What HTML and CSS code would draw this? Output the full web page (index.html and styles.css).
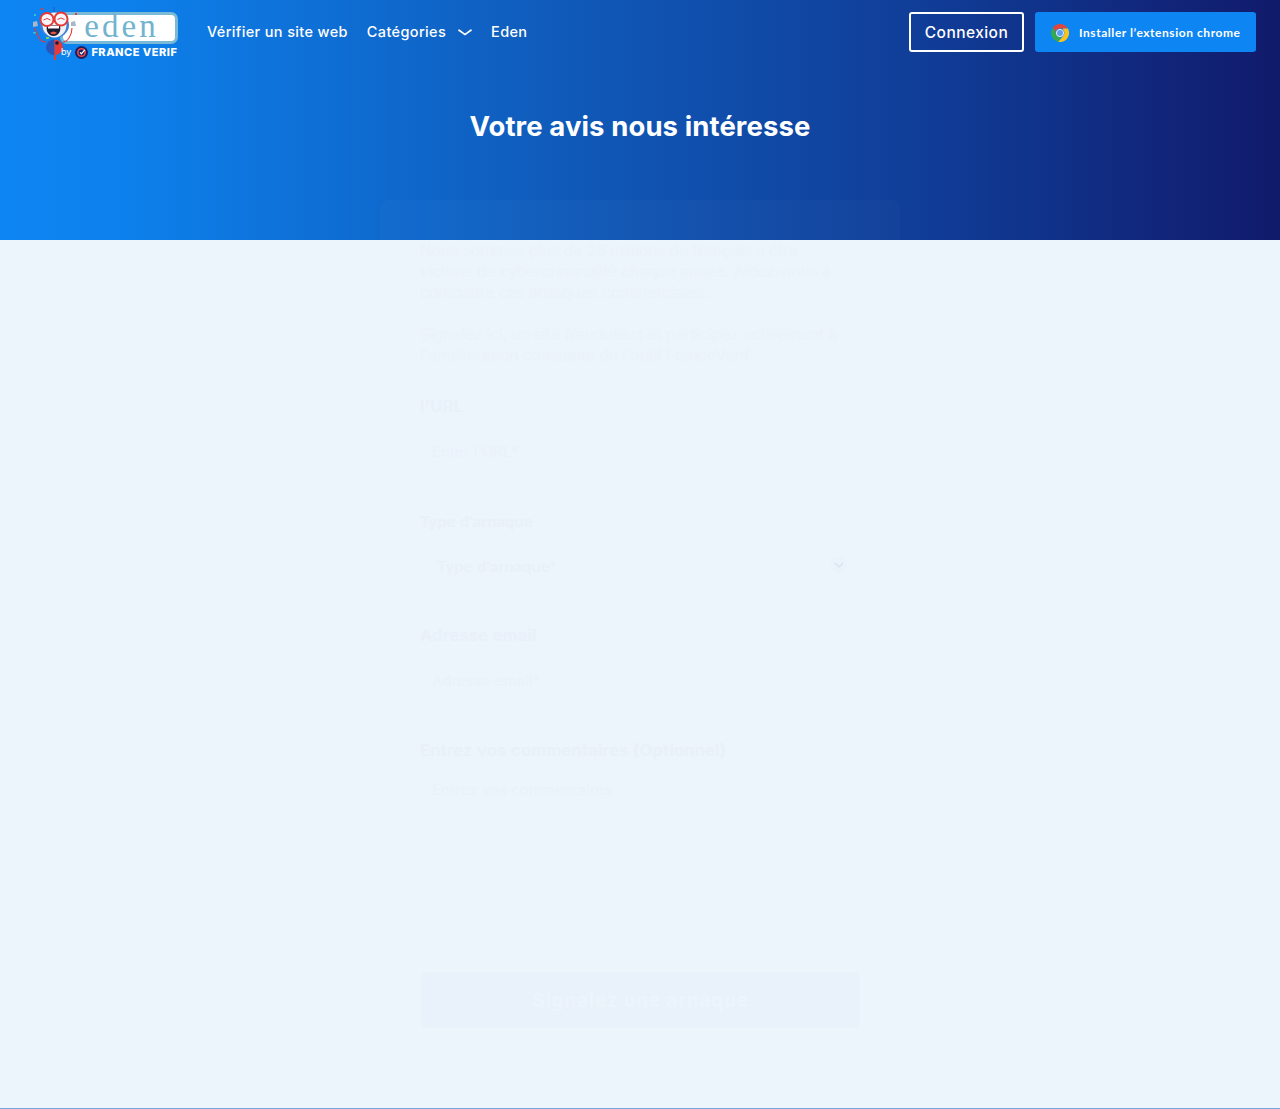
FILE: index.html
```html
<!DOCTYPE html>
<html lang="fr">
<head>
<meta charset="utf-8">
<title>Votre avis nous intéresse</title>
<link rel="stylesheet" href="styles.css">
</head>
<body>
<div class="page">
  <section class="hero">
    <header class="topbar">
      <a class="logo" href="#" aria-label="Eden by France Verif">
        <span class="logo-pill">eden</span>
        <svg class="logo-robot" width="60" height="58" viewBox="0 0 60 58">
          <g fill="none" stroke="#e63a36" stroke-width="1.100">
            <path d="M14 37c-3 0-5-1-7-4-2-3-3-6-4-10M31 37c3 0 4-1 6-4 2-3 3-6 3-10"/>
          </g>
          <path d="M1 22l0-5 4-1 1 5zM39 21l0-4 4-1 1 5z" fill="#a9b7c9"/>
          <path d="M22 2v5" stroke="#2b55b8" stroke-width="1"/>
          <ellipse cx="22.500" cy="20" rx="14.500" ry="13" fill="#3f7fd6"/>
          <ellipse cx="22.500" cy="20" rx="12" ry="12.500" fill="#eef2f8"/>
          <path d="M15 20.500h13c1.500 6-2 10.500-6.500 10.500S13.500 26.500 15 20.500z" fill="#1d1b2f"/>
          <path d="M16 21h11v2.500H16z" fill="#fff"/>
          <path d="M18 28q3.500-3 7 0q-3.500 2.500-7 0z" fill="#e2574c"/>
          <circle cx="15" cy="14.500" r="6.500" fill="#f6f6fa" stroke="#e63a36" stroke-width="2"/>
          <circle cx="29" cy="14" r="6.500" fill="#f6f6fa" stroke="#e63a36" stroke-width="2"/>
          <path d="M11.500 15q3.500-3 7 0M25.500 14.500q3.500-3 7 0" fill="none" stroke="#e63a36" stroke-width="1"/>
          <path d="M22.500 34.500a8.500 8 0 0 0-8.500 8c0 4 4 7 8.500 8z" fill="#2b55b8"/>
          <path d="M22.500 34.500a8.500 8 0 0 1 8.500 8c0 4-4 7-8.500 8z" fill="#e63a36"/>
          <circle cx="25" cy="38" r="1.800" fill="#1d1b2f"/>
          <path d="M23 50v5" stroke="#e63a36" stroke-width="2"/>
          <g fill="#3ac0c8"><rect x="2" y="9" width="2" height="2"/><rect x="9" y="3" width="2" height="2" fill="#e63a36"/><rect x="1" y="27" width="3" height="1.500"/><rect x="14" y="32" width="3" height="2" fill="#7bd050"/><rect x="43" y="8" width="2" height="2" fill="#e63a36"/></g>
        </svg>
        <span class="logo-by">by
          <svg class="logo-target" width="13" height="13" viewBox="0 0 13 13"><circle cx="6.500" cy="6.500" r="6.500" fill="#1c1f5e"/><circle cx="6.500" cy="6.500" r="3.700" fill="none" stroke="#f0484a" stroke-width="1.600"/><path d="M5 6.400l1.400 1.400 3.400-4" fill="none" stroke="#fff" stroke-width="1.300"/></svg>
          <b>FRANCE VERIF</b>
        </span>
      </a>
      <nav class="nav">
        <a href="#">Vérifier un site web</a>
        <a href="#" class="nav-cat">Catégories
          <svg width="14" height="7" viewBox="0 0 14 7"><path d="M1 1.200c3 2 4.500 3.600 6 4.300 1.500-.7 3-2.300 6-4.300" fill="none" stroke="#fff" stroke-width="1.700" stroke-linecap="round"/></svg>
        </a>
        <a href="#">Eden</a>
      </nav>
      <div class="actions">
        <a class="btn-login" href="#">Connexion</a>
        <a class="btn-install" href="#">
          <svg width="18" height="18" viewBox="0 0 18 18">
            <path d="M9 0a9 9 0 0 1 7.800 4.500H9A4.500 4.500 0 0 0 4.700 7.700L1.900 3.500A9 9 0 0 1 9 0z" fill="#e2453a"/>
            <path d="M1.900 3.500 5.100 9a4.500 4.500 0 0 0 4.900 4.400L7.300 17.800A9 9 0 0 1 1.900 3.500z" fill="#35a853"/>
            <path d="M16.800 4.500A9 9 0 0 1 7.300 17.800L11.900 12.300A4.500 4.500 0 0 0 12.100 5.700l-.1-1.200z" fill="#f9c31f"/>
            <circle cx="9" cy="9" r="3.600" fill="#5a9ff0" stroke="#e8eef8" stroke-width="1"/>
          </svg>
          Installer l’extension chrome
        </a>
      </div>
    </header>
    <h1 class="title">Votre avis nous intéresse</h1>
  </section>

  <main class="card">
    <form class="card-body">
      <p class="intro">Nous sommes plus de 26 millions de français a être victime de cybercriminalité chaque année. Aidez-nous à combattre ces arnaques commerciales.<br><br>Signalez ici, un site frauduleux et participez activement à l'amélioration constante de l'outil FranceVerif.</p>
      <div class="field">
        <label class="label">l'URL</label>
        <div class="input">Enter l'URL*</div>
      </div>
      <div class="field">
        <label class="label label-alt">Type d'arnaque</label>
        <div class="input select"><span>Type d'arnaque*</span><span class="chev"><svg width="10" height="6" viewBox="0 0 10 6"><path d="M1 1l4 4 4-4" fill="none" stroke="#000" stroke-width="1.500"/></svg></span></div>
      </div>
      <div class="field">
        <label class="label">Adresse email</label>
        <div class="input">Adresse email*</div>
      </div>
      <div class="field field-comment">
        <label class="label">Entrez vos commentaires (Optionnel)</label>
        <div class="textarea">Entrez vos commentaires</div>
      </div>
      <button class="submit" type="button"><span>Signalez une arnaque</span></button>
    </form>
  </main>
  <footer class="foot"></footer>
</div>
</body>
</html>
```
FILE: styles.css
```css
* { box-sizing: border-box; }
html, body { margin: 0; padding: 0; }
body {
  background: #ecf4fc;
  font-family: Inter, "Noto Sans", sans-serif;
  color: #fff;
}
a { color: inherit; text-decoration: none; }
.page {
  min-height: 1109px;
  display: flex;
  flex-direction: column;
}
.hero {
  height: 240px;
  background: linear-gradient(90deg, #0d85f3 0%, #0d82ee 8%, #1059b8 45%, #103a94 75%, #111a6b 100%);
}
.topbar {
  height: 64px;
  display: flex;
  align-items: center;
  padding: 0 24px 0 30px;
}
.logo {
  position: relative;
  display: block;
  width: 150px;
  height: 64px;
  flex: none;
}
.logo-robot { position: absolute; left: 2px; top: 5px; }
.logo-pill {
  position: absolute;
  left: 30px;
  top: 12px;
  width: 118px;
  height: 32px;
  background: #fff;
  border: 3px solid #7bbad6;
  border-radius: 7px;
  color: #72b4cf;
  font: 400 33px/22px "Liberation Serif", serif;
  text-align: center;
  padding-left: 5px;
  letter-spacing: 3px;
}
.logo-by {
  position: absolute;
  left: 31px;
  top: 46px;
  height: 12px;
  display: flex;
  align-items: center;
  gap: 2px;
  font-size: 9px;
  line-height: 12px;
  white-space: nowrap;
}
.logo-by b { font: 800 11px/12px Inter, sans-serif; letter-spacing: .5px; }
.logo-target { margin: 0 1px 0 2px; flex: none; }
.nav {
  display: flex;
  align-items: center;
  gap: 19px;
  margin-left: 27px;
  padding-bottom: 1px;
  font-size: 14.500px;
  font-weight: 500;
  letter-spacing: .35px;
}
.nav-cat { display: flex; align-items: center; gap: 12px; }
.nav-cat svg { margin-top: 2px; }
.actions {
  margin-left: auto;
  display: flex;
  align-items: center;
  gap: 11px;
}
.btn-login {
  width: 115px;
  height: 40px;
  border: 2px solid #fff;
  border-radius: 3px;
  display: flex;
  align-items: center;
  justify-content: center;
  font-size: 15.500px;
  font-weight: 500;
  letter-spacing: .45px;
}
.btn-install {
  width: 221px;
  height: 40px;
  background: #0d85f3;
  border-radius: 3px;
  display: flex;
  align-items: center;
  gap: 10px;
  padding: 1px 0 0 16px;
  font: 700 12px/1 Lato, sans-serif;
  letter-spacing: .55px;
}
.title {
  margin: 44px 0 0;
  text-align: center;
  font-size: 27.500px;
  line-height: 36px;
  font-weight: 700;
  letter-spacing: .1px;
}
.card {
  position: relative;
  width: 520px;
  margin: -40px auto 0;
  background: rgba(255, 255, 255, .02);
  border-radius: 8px 8px 0 0;
  padding: 40px 40px 0;
  flex: 1;
}
.card-body { display: flex; flex-direction: column; }
.intro {
  margin: 0;
  max-width: 428px;
  font-size: 15.500px;
  line-height: 21px;
  color: #eaf2fa;
}
.field { margin-top: 28px; }
.field + .field { margin-top: 33px; }
.label {
  display: block;
  height: 24px;
  font-size: 16.500px;
  line-height: 24px;
  font-weight: 600;
  letter-spacing: .3px;
  color: #e8f0f9;
}
.label-alt { font: 700 16px/24px Lato, sans-serif; letter-spacing: .3px; }
.input {
  height: 48px;
  margin-top: 9.500px;
  padding: 0 12px;
  display: flex;
  align-items: center;
  font-size: 14.500px;
  letter-spacing: .3px;
  color: #e9f2fb;
}
.select {
  justify-content: space-between;
  padding: 0 13px 2px 17px;
  font: 500 16px Lato, sans-serif;
  letter-spacing: .4px;
  color: #e8f0f9;
}
.chev {
  width: 16px;
  height: 16px;
  border-radius: 50%;
  background: #eaf2fb;
  display: flex;
  align-items: center;
  justify-content: center;
}
.chev svg { opacity: .06; }
.field-comment .label { margin-bottom: 8.500px; }
.textarea {
  height: 180px;
  padding: 10px 12px;
  font-size: 14.500px;
  letter-spacing: .3px;
  line-height: 20px;
  color: #e9f2fb;
}
.submit {
  margin: 22px 0 0 1px;
  width: 439px;
  height: 56px;
  border: 0;
  border-radius: 6px;
  background: #e9f2fb;
  color: #ecf4fc;
  font: 700 19px Inter, sans-serif;
  letter-spacing: .8px;
}
.foot { height: 1px; background: #7aa6e0; }
```
